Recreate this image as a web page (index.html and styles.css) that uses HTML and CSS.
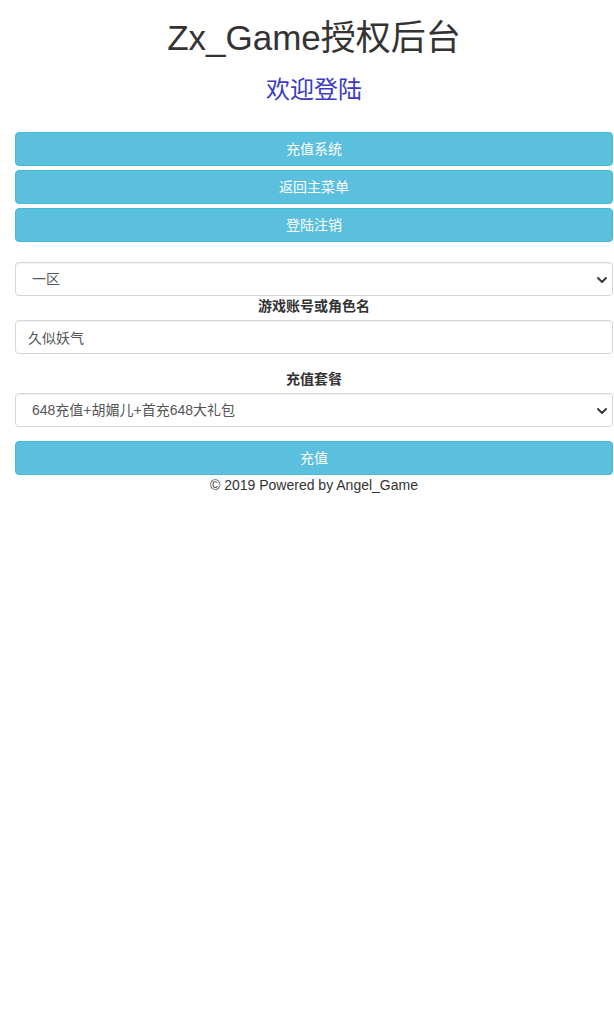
FILE: index.html
```
<!DOCTYPE html>
<html lang="zh-CN">
<head>
<meta charset="utf-8">
<title>Zx_Game授权后台</title>
<link rel="stylesheet" href="styles.css">
</head>
<body>
<div class="page">
  <h1 class="title">Zx_Game授权后台</h1>
  <h3 class="subtitle">欢迎登陆</h3>
  <div class="menu">
    <button class="btn">充值系统</button>
    <button class="btn">返回主菜单</button>
    <button class="btn">登陆注销</button>
  </div>
  <form class="form">
    <div class="select-wrap">
      <select class="control select">
        <option>一区</option>
      </select>
      <svg class="chevron" viewBox="0 0 10 6" width="10" height="6"><path d="M1 1 L5 5 L9 1" fill="none" stroke="#333" stroke-width="1.8" stroke-linecap="round" stroke-linejoin="round"/></svg>
    </div>
    <label class="label">游戏账号或角色名</label>
    <input class="control" type="text" value="久似妖气">
    <label class="label label-pkg">充值套餐</label>
    <div class="select-wrap">
      <select class="control select">
        <option>648充值+胡媚儿+首充648大礼包</option>
      </select>
      <svg class="chevron" viewBox="0 0 10 6" width="10" height="6"><path d="M1 1 L5 5 L9 1" fill="none" stroke="#333" stroke-width="1.8" stroke-linecap="round" stroke-linejoin="round"/></svg>
    </div>
    <button class="btn btn-submit" type="button">充值</button>
  </form>
  <p class="footer">© 2019 Powered by Angel_Game</p>
</div>
</body>
</html>
```
FILE: styles.css
```
* { box-sizing: border-box; }
html, body { margin: 0; padding: 0; background: #fff; }
body {
  font-family: "Liberation Sans", Arial, "Noto Sans CJK SC", sans-serif;
  font-size: 14px;
  color: #333;
  line-height: 20px;
}
.page {
  margin-left: 15px;
  width: 598px;
  display: flex;
  flex-direction: column;
}
.title {
  margin: 18px 0 0;
  font-size: 35px;
  line-height: 40px;
  font-weight: 400;
  text-align: center;
  color: #333;
}
.subtitle {
  margin: 18px 0 0;
  font-size: 24px;
  line-height: 28px;
  font-weight: 400;
  text-align: center;
  color: #3a3ac4;
}
.menu {
  margin-top: 28px;
  display: flex;
  flex-direction: column;
  gap: 4px;
}
.btn {
  display: block;
  width: 100%;
  height: 34px;
  margin: 0;
  padding: 6px 12px;
  font-family: "Liberation Sans", Arial, "Noto Sans CJK SC", sans-serif;
  font-size: 14px;
  line-height: 20px;
  color: #fff;
  background: #5bc0de;
  border: 1px solid #46b8da;
  border-radius: 4px;
  text-align: center;
}
.form {
  margin: 20px 0 0;
  display: flex;
  flex-direction: column;
}
.control {
  display: block;
  width: 100%;
  height: 34px;
  margin: 0;
  padding: 6px 12px;
  font-family: "Liberation Sans", Arial, "Noto Sans CJK SC", sans-serif;
  font-size: 14px;
  line-height: 20px;
  color: #555;
  background: #fff;
  border: 1px solid #d6d6d6;
  border-radius: 4px;
  box-shadow: inset 0 1px 1px rgba(0,0,0,.06);
  outline: none;
}
.select-wrap { position: relative; }
.select {
  -webkit-appearance: none;
  appearance: none;
  padding-left: 16px;
  padding-right: 30px;
}
.chevron {
  position: absolute;
  right: 6px;
  top: 15px;
  pointer-events: none;
}
.label {
  display: block;
  margin: 0 0 4px;
  font-weight: 700;
  text-align: center;
  line-height: 20px;
}
.label-pkg { margin-top: 15px; }
.btn-submit { margin-top: 14px; }
.footer {
  margin: 0;
  text-align: center;
  line-height: 20px;
  color: #333;
}
```
